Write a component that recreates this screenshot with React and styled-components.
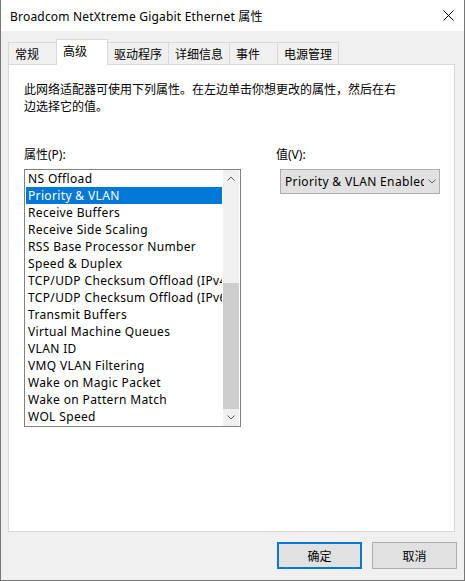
import styled, { createGlobalStyle } from "styled-components";

const GlobalStyle = createGlobalStyle`
  html, body {
    margin: 0;
    padding: 0;
    background: #f0f0f0;
  }
  body {
    font-family: "Noto Sans", "Noto Sans CJK SC", sans-serif;
    font-size: 12px;
    color: #000;
  }
  * {
    box-sizing: border-box;
  }
`;

const tabs = ['常规', '高级', '驱动程序', '详细信息', '事件', '电源管理'];

const properties = [
  'NS Offload',
  'Priority & VLAN',
  'Receive Buffers',
  'Receive Side Scaling',
  'RSS Base Processor Number',
  'Speed & Duplex',
  'TCP/UDP Checksum Offload (IPv4)',
  'TCP/UDP Checksum Offload (IPv6)',
  'Transmit Buffers',
  'Virtual Machine Queues',
  'VLAN ID',
  'VMQ VLAN Filtering',
  'Wake on Magic Packet',
  'Wake on Pattern Match',
  'WOL Speed',
];

function Chevron({ up }) {
  return (
    <svg width="8" height="5" viewBox="0 0 8 5">
      <polyline
        points={up ? '0.5,4.5 4,1 7.5,4.5' : '0.5,0.5 4,4 7.5,0.5'}
        fill="none"
        stroke="#606060"
        strokeWidth="1"
      />
    </svg>
  );
}

function App() {
  return (
    <>
      <GlobalStyle />
      <Window>
        <TitleBar>
          <Title>Broadcom NetXtreme Gigabit Ethernet 属性</Title>
          <svg width="11" height="11" viewBox="0 0 11 11">
            <path d="M0.5 0.5 L10.5 10.5 M10.5 0.5 L0.5 10.5" stroke="#000" strokeWidth="1" />
          </svg>
        </TitleBar>
        <Body>
          <TabRow>
            {tabs.map((t) => (
              <Tab key={t} $active={t === '高级'}>{t}</Tab>
            ))}
          </TabRow>
          <Panel>
            <Description>
              此网络适配器可使用下列属性。在左边单击你想更改的属性，然后在右边选择它的值。
            </Description>
            <Columns>
              <LeftCol>
                <Label>属性(P):</Label>
                <ListBox>
                  <Items>
                    {properties.map((p) => (
                      <Item key={p} $selected={p === 'Priority & VLAN'}>{p}</Item>
                    ))}
                  </Items>
                  <ScrollBar>
                    <Arrow><Chevron up /></Arrow>
                    <Track>
                      <Thumb />
                    </Track>
                    <Arrow><Chevron /></Arrow>
                  </ScrollBar>
                </ListBox>
              </LeftCol>
              <RightCol>
                <Label>值(V):</Label>
                <Combo>
                  <ComboText>Priority &amp; VLAN Enabled</ComboText>
                  <Chevron />
                </Combo>
              </RightCol>
            </Columns>
          </Panel>
          <ButtonRow>
            <Button $primary>确定</Button>
            <Button>取消</Button>
          </ButtonRow>
        </Body>
      </Window>
    </>
  );
}

const Window = styled.div`
  width: 465px;
  height: 581px;
  display: flex;
  flex-direction: column;
  border: 1px solid #767676;
  border-top: none;
  background: #f0f0f0;
`;

const TitleBar = styled.div`
  height: 31px;
  flex: none;
  display: flex;
  align-items: center;
  justify-content: space-between;
  padding: 0 10px 0 9px;
  background: #fff;
  font-size: 12px;
`;

const Title = styled.span`
  letter-spacing: 0.2px;
`;

const Body = styled.div`
  flex: 1;
  display: flex;
  flex-direction: column;
  padding: 8px 9px 11px 7px;
`;

const TabRow = styled.div`
  height: 25px;
  flex: none;
  display: flex;
  align-items: flex-end;
`;

const Tab = styled.div`
  position: relative;
  z-index: ${(p) => (p.$active ? 1 : 0)};
  display: flex;
  align-items: center;
  min-width: ${(p) => (p.$active ? 52 : 49)}px;
  height: ${(p) => (p.$active ? 26 : 22)}px;
  margin-bottom: ${(p) => (p.$active ? -1 : 0)}px;
  padding: 0 6px ${(p) => (p.$active ? 4 : 0)}px 6px;
  margin-left: -1px;
  border: 1px solid #d9d9d9;
  border-bottom: none;
  background: ${(p) => (p.$active ? '#fff' : '#f0f0f0')};
  white-space: nowrap;

  &:first-child {
    margin-left: 0;
  }
`;

const Panel = styled.div`
  flex: 1;
  display: flex;
  flex-direction: column;
  padding: 16px 15px 0 15px;
  background: #fff;
  border: 1px solid #d9d9d9;
`;

const Description = styled.p`
  margin: 0;
  width: 380px;
  line-height: 17px;
`;

const Columns = styled.div`
  display: flex;
  gap: 35px;
  margin-top: 31px;
`;

const LeftCol = styled.div`
  width: 217px;
  display: flex;
  flex-direction: column;
`;

const RightCol = styled.div`
  display: flex;
  flex-direction: column;
`;

const Label = styled.div`
  line-height: 17px;
  margin-bottom: 6px;
`;

const ListBox = styled.div`
  height: 258px;
  display: flex;
  border: 1px solid #828282;
  background: #fff;
`;

const Items = styled.div`
  flex: 1;
  min-width: 0;
  padding: 0 1px;
  overflow: hidden;
`;

const Item = styled.div`
  height: 17px;
  line-height: 17px;
  padding-left: 2px;
  white-space: nowrap;
  overflow: hidden;
  letter-spacing: 0.35px;
  background: ${(p) => (p.$selected ? '#0078d7' : 'transparent')};
  color: ${(p) => (p.$selected ? '#fff' : '#000')};
`;

const ScrollBar = styled.div`
  width: 16px;
  margin-right: 1px;
  display: flex;
  flex-direction: column;
  background: #f0f0f0;
`;

const Arrow = styled.div`
  height: 17px;
  flex: none;
  display: flex;
  align-items: center;
  justify-content: center;
`;

const Track = styled.div`
  flex: 1;
  display: flex;
  flex-direction: column;
`;

const Thumb = styled.div`
  margin-top: auto;
  height: 126px;
  background: #cdcdcd;
`;

const Combo = styled.div`
  width: 160px;
  height: 25px;
  margin-left: 4px;
  display: flex;
  align-items: center;
  gap: 4px;
  padding: 0 3px 0 4px;
  background: #e1e1e1;
  border: 1px solid #adadad;
`;

const ComboText = styled.span`
  flex: 1;
  min-width: 0;
  overflow: hidden;
  white-space: nowrap;
  letter-spacing: 0.35px;
`;

const ButtonRow = styled.div`
  flex: none;
  display: flex;
  justify-content: flex-end;
  gap: 10px;
  margin-top: 10px;
  margin-right: -2px;
`;

const Button = styled.button`
  width: 85px;
  height: 27px;
  padding: 0;
  background: #e1e1e1;
  border: ${(p) => (p.$primary ? '2px solid #0078d7' : '1px solid #adadad')};
  font-family: "Noto Sans", "Noto Sans CJK SC", sans-serif;
  font-size: 12px;
  color: #000;
`;

export default App;
